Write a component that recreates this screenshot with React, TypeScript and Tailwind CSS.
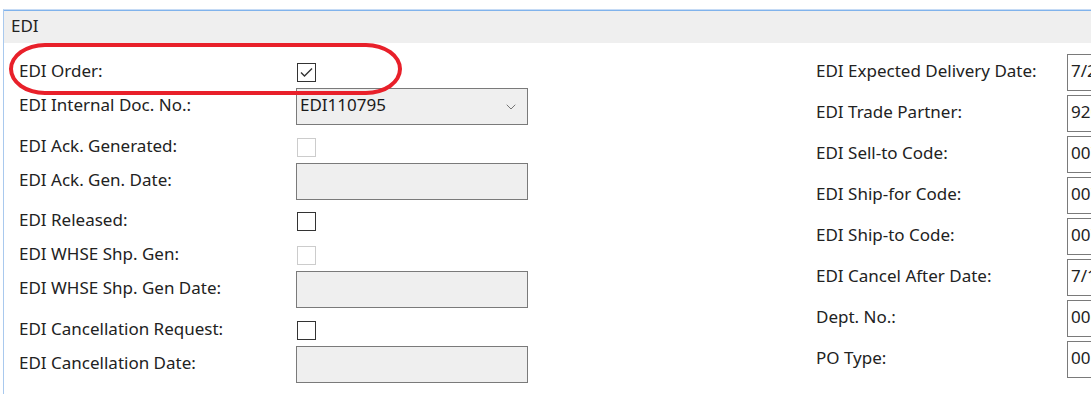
import { ChevronDown } from "lucide-react";

type Row = { label: string; kind: "check" | "checkOff" | "checked" | "input" | "select"; value?: string; gap: string };

const leftRows: Row[] = [
  { label: "EDI Order:", kind: "checked", gap: "mb-[6px]" },
  { label: "EDI Internal Doc. No.:", kind: "select", value: "EDI110795", gap: "mb-[13px]" },
  { label: "EDI Ack. Generated:", kind: "checkOff", gap: "mb-[6px]" },
  { label: "EDI Ack. Gen. Date:", kind: "input", gap: "mb-[12px]" },
  { label: "EDI Released:", kind: "check", gap: "mb-[15px]" },
  { label: "EDI WHSE Shp. Gen:", kind: "checkOff", gap: "mb-[6px]" },
  { label: "EDI WHSE Shp. Gen Date:", kind: "input", gap: "mb-[13px]" },
  { label: "EDI Cancellation Request:", kind: "check", gap: "mb-[6px]" },
  { label: "EDI Cancellation Date:", kind: "input", gap: "mb-0" },
];

const rightRows = [
  { label: "EDI Expected Delivery Date:", value: "7/25/2019" },
  { label: "EDI Trade Partner:", value: "9200" },
  { label: "EDI Sell-to Code:", value: "0070" },
  { label: "EDI Ship-for Code:", value: "0070" },
  { label: "EDI Ship-to Code:", value: "0070" },
  { label: "EDI Cancel After Date:", value: "7/10/2019" },
  { label: "Dept. No.:", value: "0060" },
  { label: "PO Type:", value: "0010" },
];

function Control({ row }: { row: Row }) {
  if (row.kind === "checked") {
    return (
      <div className="ml-px flex h-[19px] w-[19px] items-center justify-center border border-[#333333] bg-white">
        <svg width="13" height="11" viewBox="0 0 13 11">
          <path d="M1 5.5 L4.5 9 L12 1.5" fill="none" stroke="#333" strokeWidth="1.4" />
        </svg>
      </div>
    );
  }
  if (row.kind === "check") {
    return <div className="ml-px h-[19px] w-[19px] border border-[#333333] bg-white" />;
  }
  if (row.kind === "checkOff") {
    return <div className="ml-px h-[19px] w-[19px] border border-[#cccccc] bg-white" />;
  }
  if (row.kind === "select") {
    return (
      <div className="flex h-[37px] w-[232px] items-center justify-between border border-[#7a7a7a] bg-[#efefef] pl-[3px] pr-[8px]">
        <span className="pb-[3px] text-[17px] text-[#1a1a1a]">{row.value}</span>
        <ChevronDown size={16} strokeWidth={1.2} className="text-[#555555]" />
      </div>
    );
  }
  return <div className="h-[37px] w-[232px] border border-[#7a7a7a] bg-[#efefef]" />;
}

export default function App() {
  return (
    <div className="h-[394px] w-[1091px] overflow-hidden bg-white pl-[3px] pt-[9px] font-['Noto_Sans',sans-serif] text-[#222222]">
      <div className="relative h-full border-t border-l border-t-[#c6dbf5] border-l-[#a9c9ee]">
        <div className="border-t border-[#80b3ec]" />
        <div className="flex h-[32px] items-center bg-[#efefef] pl-[7px] pb-[2px] text-[17px]">EDI</div>

        <div className="flex">
          <div className="flex w-[800px] shrink-0 flex-col pl-[15px] pt-[20px]">
            {leftRows.map((r) => (
              <div
                key={r.label}
                className={`flex items-center ${r.kind === "input" || r.kind === "select" ? "h-[37px]" : "h-[19px]"} ${r.gap}`}
              >
                <div className="w-[277px] shrink-0 whitespace-nowrap pb-[4px] text-[17px] leading-[20px]">{r.label}</div>
                <Control row={r} />
              </div>
            ))}
          </div>

          <div className="flex shrink-0 flex-col gap-[4px] pl-[12px] pt-[11px]">
            {rightRows.map((r) => (
              <div key={r.label} className="flex h-[37px] items-center">
                <div className="w-[251px] shrink-0 whitespace-nowrap pb-[4px] text-[17px] leading-[20px]">{r.label}</div>
                <div className="flex h-[37px] w-[120px] shrink-0 items-center border border-[#7a7a7a] bg-white pl-[3px] pb-[3px] text-[17px]">
                  {r.value}
                </div>
              </div>
            ))}
          </div>
        </div>

        <div className="absolute left-[5px] top-[33px] h-[52px] w-[393px] rounded-[36px/26px] border-[4px] border-[#e8202a]" />
      </div>
    </div>
  );
}
